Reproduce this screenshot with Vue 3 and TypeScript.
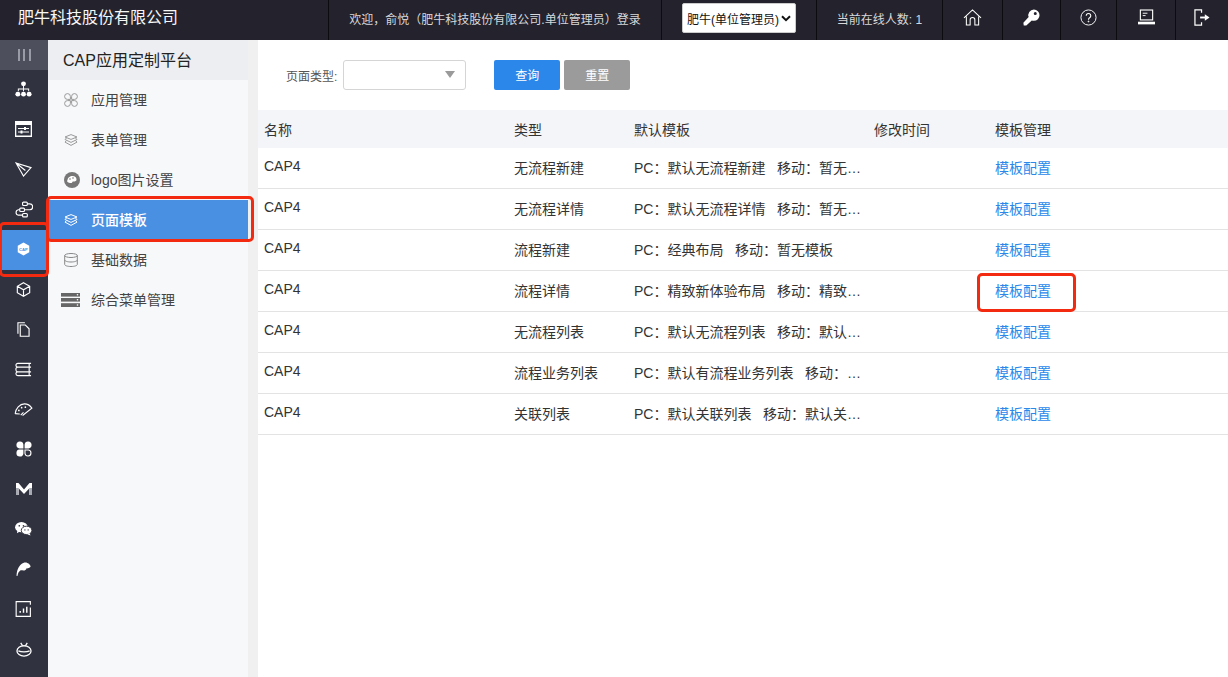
<script setup lang="ts">
const topCells = [
  { w: 60, k: 'home' }, { w: 58, k: 'key' }, { w: 56, k: 'help' }, { w: 59, k: 'pc' }, { w: 53, k: 'exit' },
]
const railIcons = ['org','panel','send','flow','cap','box','files','stack','gauge','clover','m','wechat','feather','chart','bug']
const menu = [
  { t: '应用管理', i: 'apps' }, { t: '表单管理', i: 'layers' }, { t: 'logo图片设置', i: 'palette' },
  { t: '页面模板', i: 'layers', active: true }, { t: '基础数据', i: 'db' }, { t: '综合菜单管理', i: 'server' },
]
const rows = [
  ['无流程新建', 'PC：默认无流程新建   移动：暂无…'],
  ['无流程详情', 'PC：默认无流程详情   移动：暂无…'],
  ['流程新建', 'PC：经典布局   移动：暂无模板'],
  ['流程详情', 'PC：精致新体验布局   移动：精致…'],
  ['无流程列表', 'PC：默认无流程列表   移动：默认…'],
  ['流程业务列表', 'PC：默认有流程业务列表   移动：…'],
  ['关联列表', 'PC：默认关联列表   移动：默认关…'],
]
</script>

<template>
  <div class="page">
    <header class="top">
      <div class="brand">肥牛科技股份有限公司</div>
      <div class="cell welcome">欢迎，俞悦（肥牛科技股份有限公司.单位管理员）登录</div>
      <div class="cell role">
        <div class="fake-select">肥牛(单位管理员)
          <svg width="10" height="7" viewBox="0 0 10 7"><path d="M1 1.200l4 4 4-4" fill="none" stroke="#111" stroke-width="2"/></svg>
        </div>
      </div>
      <div class="cell online">当前在线人数: 1</div>
      <div v-for="c in topCells" :key="c.k" class="cell icon-cell" :style="{ width: c.w + 'px' }">
        <svg v-if="c.k === 'home'" width="19" height="17" viewBox="0 0 20 18" fill="none" stroke="#fff" stroke-width="1.100"><path d="M1 9.500L10 1l9 8.500M3.500 8v9h4v-5.500a2.500 2.500 0 0 1 5 0V17h4V8"/></svg>
        <svg v-if="c.k === 'key'" width="17" height="17" viewBox="0 0 18 18" fill="#fff"><path d="M11.500 0.500a6 6 0 0 1 0 12c-.8 0-1.500-.2-2.200-.4L3.500 17.500H.8l-.4-3L6 8.600a6 6 0 0 1 5.500-8.100zm1.500 2.600a1.600 1.600 0 1 0 0 3.200 1.600 1.600 0 0 0 0-3.200z"/></svg>
        <svg v-if="c.k === 'help'" width="17" height="17" viewBox="0 0 18 18" fill="none" stroke="#fff" stroke-width="1"><circle cx="9" cy="9" r="8"/><path d="M6.600 7.200a2.400 2.400 0 1 1 3.600 2.100c-.8.500-1.200.9-1.200 2" stroke-width="1.200"/><circle cx="9" cy="13.200" r=".5" fill="#fff"/></svg>
        <svg v-if="c.k === 'pc'" width="17" height="16" viewBox="0 0 18 16" fill="none" stroke="#fff"><rect x="2.500" y=".6" width="13" height="10.500" stroke-width="1.200"/><path d="M5 4h5M5 6.500h3" stroke-width="1"/><path d="M0 13h18v2.800H0z" fill="#fff" stroke="none"/></svg>
        <svg v-if="c.k === 'exit'" width="16" height="17" viewBox="0 0 17 18" fill="none" stroke="#fff" stroke-width="1.300"><path d="M8 4V1H1v16h7v-3"/><path d="M6.500 9H12" stroke-width="2"/><path d="M11.500 5.500L16.500 9l-5 3.500z" fill="#fff" stroke="none"/></svg>
      </div>
    </header>

    <div class="body">
      <nav class="rail">
        <div class="collapse"><i></i><i></i><i></i></div>
        <div v-for="r in railIcons" :key="r" class="rail-item" :class="{ on: r === 'cap' }">
          <svg v-if="r === 'org'" width="17" height="16" viewBox="0 0 18 17" fill="#fff"><circle cx="9" cy="3" r="2.600"/><path d="M8.500 5h1v3h5.500v3h-1V9H9.500v2h-1V9H4v2H3V8h5.500z"/><circle cx="3" cy="14" r="2.600"/><circle cx="9" cy="14" r="2.600"/><circle cx="15" cy="14" r="2.600"/></svg>
          <svg v-if="r === 'panel'" width="17" height="16" viewBox="0 0 17 16"><rect width="17" height="16" fill="#fff"/><rect x="1.300" y="4" width="14.400" height="10.500" fill="#30333f"/><path d="M3 7.500h11M3 11h11" stroke="#fff" stroke-width="1"/><rect x="9" y="6" width="2" height="3" fill="#fff"/><rect x="5.500" y="9.500" width="2" height="3" fill="#fff"/></svg>
          <svg v-if="r === 'send'" width="17" height="15" viewBox="0 0 18 16" fill="none" stroke="#fff" stroke-width="1.200"><path d="M1 1l16 5-8 9zM1 1l10 8"/></svg>
          <svg v-if="r === 'flow'" width="18" height="17" viewBox="0 0 19 17" fill="none" stroke="#fff" stroke-width="1.200"><rect x="8" y=".7" width="5" height="3.600" rx="1"/><rect x="5" y="7" width="5" height="3.600" rx="1"/><rect x="8" y="12.700" width="5" height="3.600" rx="1"/><path d="M13 2.500h2.500a3 3 0 0 1 0 6.300H10M5 8.800H3.500a2.900 2.900 0 0 0 0 5.700H8"/></svg>
          <svg v-if="r === 'cap'" width="13" height="14" viewBox="0 0 14 15"><path d="M7 .5l6.200 3.400v7.200L7 14.500.8 11.100V3.900z" fill="#fff"/><text x="7" y="9.300" text-anchor="middle" class="captext">CAP</text></svg>
          <svg v-if="r === 'box'" width="15" height="15" viewBox="0 0 16 17" fill="none" stroke="#fff" stroke-width="1.300"><path d="M8 .8l7 4v7.400l-7 4-7-4V4.800zM1 4.800l7 4 7-4M8 8.800v7.400"/></svg>
          <svg v-if="r === 'files'" width="13" height="15" viewBox="0 0 14 16" fill="none" stroke="#fff" stroke-width="1.200"><path d="M1 12.500V.7h7.500"/><path d="M3.500 3.200h5.500l4 4v8.100H3.500z"/></svg>
          <svg v-if="r === 'stack'" width="17" height="15" viewBox="0 0 18 15" fill="none" stroke="#fff" stroke-width="1.200"><path d="M17 1H3a2 2 0 0 0-2 2v0a2 2 0 0 0 2 2h14M17 5H3a2 2 0 0 0-2 2.500V8a2 2 0 0 0 2 2h14M17 10H3a2 2 0 0 0-2 2v0a2 2 0 0 0 2 2h14M15 1v13"/></svg>
          <svg v-if="r === 'gauge'" width="19" height="13" viewBox="0 0 20 14" fill="none" stroke="#fff" stroke-width="1.200"><path d="M1 11.500C1.500 6 6 1 11 1c3 0 6 1.500 8 4.500L9 13.500"/><path d="M1 11.500l5 .3"/><circle cx="5" cy="8" r=".9" fill="#fff" stroke="none"/><circle cx="8" cy="5" r=".9" fill="#fff" stroke="none"/><circle cx="12" cy="4.500" r=".9" fill="#fff" stroke="none"/><path d="M7 13l3-3"/></svg>
          <svg v-if="r === 'clover'" width="16" height="16" viewBox="0 0 16 16" fill="#fff"><path d="M7.400 7.400H3.500a3.500 3.500 0 1 1 3.900-3.900zM8.600 7.400h3.900a3.500 3.500 0 1 0-3.900-3.900zM7.400 8.600H3.500a3.500 3.500 0 1 0 3.900 3.900z"/><path d="M9 9h3.500A3 3 0 1 1 9 12.500z" fill="none" stroke="#fff" stroke-width="1.100"/></svg>
          <svg v-if="r === 'm'" width="16" height="12" viewBox="0 0 16 12"><path d="M0 0h2.500L8 6.500 13.500 0H16v12h-2.800V5.500L8 11 2.800 5.500V12H0z" fill="#fff"/><path d="M1.400 5v7M14.600 5v7" stroke="#a9abb3" stroke-width="2.800"/></svg>
          <svg v-if="r === 'wechat'" width="17" height="14" viewBox="0 0 18 15" fill="#fff"><ellipse cx="6.800" cy="5.500" rx="6.800" ry="5.500"/><path d="M2.500 8.500L2 12l3.500-2z"/><ellipse cx="12.300" cy="9" rx="5.700" ry="4.500" stroke="#30333f"/><path d="M15.500 12l1 2.500-3.500-1.500z"/><circle cx="4.500" cy="4" r=".9" fill="#30333f"/><circle cx="9" cy="4" r=".9" fill="#30333f"/><circle cx="10.500" cy="8.500" r=".7" fill="#30333f"/><circle cx="14" cy="8.500" r=".7" fill="#30333f"/></svg>
          <svg v-if="r === 'feather'" width="15" height="14" viewBox="0 0 16 15" fill="#fff"><path d="M.6 15C.6 10 2.500 5 5.500 2.500 7.500.8 10 .2 12 1c2 .6 3.500 2 3.600 4-1.500 1.500-3 2-4.500 1.800.3 1-.7 2-2 2.200-1.800.3-3.300-.3-4.500 0C3 10 2 12 1.500 15z"/></svg>
          <svg v-if="r === 'chart'" width="17" height="16" viewBox="0 0 17 17" fill="none" stroke="#fff" stroke-width="1.200"><path d="M15.800 4V.7H.7v15.600h15.100V7"/><path d="M5 12.500v-2M8.500 12.500v-4.500M12 12.500v-6.500" stroke-width="1.500"/></svg>
          <svg v-if="r === 'bug'" width="16" height="15" viewBox="0 0 17 16" fill="none" stroke="#fff" stroke-width="1.400"><ellipse cx="8.500" cy="9.500" rx="7.500" ry="5.500"/><path d="M2.500 9.500c3 1.500 9 1.500 12 0M5 1l2 3M12 1l-2 3"/></svg>
        </div>
      </nav>

      <aside class="side">
        <div class="side-head">CAP应用定制平台</div>
        <div v-for="m in menu" :key="m.t" class="side-item" :class="{ on: m.active }">
          <span class="side-icon" :class="{ wide: m.i === 'server' }">
            <svg v-if="m.i === 'apps'" width="14" height="14" viewBox="0 0 14 14" fill="none" stroke="#999" stroke-width="1"><path d="M6.400 6.400H3.500a2.900 2.900 0 1 1 2.900-2.900zM7.600 6.400h2.900a2.900 2.900 0 1 0-2.900-2.900zM6.400 7.600H3.500a2.900 2.900 0 1 0 2.900 2.900zM7.600 7.600h2.900a2.900 2.900 0 1 1-2.900 2.900z"/></svg>
            <svg v-if="m.i === 'layers'" width="14" height="12" viewBox="0 0 14 12" fill="none" :stroke="m.active ? '#fff' : '#999'" stroke-width="1"><path d="M7 .6l6 2.400-6 2.400-6-2.400z"/><path d="M2.500 4L1 5.500 7 8.400l6-2.900L11.500 4M2.500 6.600L1 8.100l6 3.300 6-3.300-1.500-1.500"/></svg>
            <svg v-if="m.i === 'palette'" width="16" height="16" viewBox="0 0 16 16"><circle cx="8" cy="8" r="8" fill="#777"/><path d="M3.500 8.500C3.500 5.500 6 4 8.500 4s4 1.500 4 3.500-2.500 2-3.500 2-.5 1.500-1.500 1.500c-2 0-4.500-.5-4.500-2.500z" fill="#fff"/><circle cx="6" cy="7" r=".8" fill="#777"/><circle cx="9" cy="6" r=".8" fill="#777"/></svg>
            <svg v-if="m.i === 'db'" width="14" height="14" viewBox="0 0 14 14" fill="none" stroke="#888" stroke-width="1"><ellipse cx="7" cy="2.500" rx="6.300" ry="2"/><path d="M.7 2.500v9c0 1.100 2.800 2 6.300 2s6.300-.9 6.300-2v-9M.7 7c0 1.100 2.800 2 6.300 2s6.300-.9 6.300-2"/></svg>
            <svg v-if="m.i === 'server'" width="19" height="14" viewBox="0 0 19 14" fill="#666"><rect width="19" height="3.600"/><rect y="5" width="19" height="3.600"/><rect y="10.200" width="19" height="3.800"/><circle cx="16.500" cy="1.800" r=".8" fill="#fff"/><circle cx="16.500" cy="6.800" r=".8" fill="#fff"/><circle cx="16.500" cy="12" r=".8" fill="#fff"/></svg>
          </span>
          <span class="side-text">{{ m.t }}</span>
        </div>
      </aside>
      <div class="gutter"></div>

      <main class="main">
        <form class="filter" @submit.prevent>
          <label class="flabel">页面类型:</label>
          <div class="combo"><span class="caret"></span></div>
          <button class="btn primary" type="button">查询</button>
          <button class="btn grey" type="button">重置</button>
        </form>
        <div class="table">
          <div class="tr th">
            <div class="c1">名称</div><div class="c2">类型</div><div class="c3">默认模板</div><div class="c4">修改时间</div><div class="c5">模板管理</div>
          </div>
          <div v-for="(r, idx) in rows" :key="idx" class="tr td">
            <div class="c1 name">CAP4</div>
            <div class="c2">{{ r[0] }}</div>
            <div class="c3 ell">{{ r[1] }}</div>
            <div class="c4"></div>
            <div class="c5"><a class="link">模板配置</a></div>
          </div>
        </div>
      </main>
    </div>

    <div class="mark mark-rail"></div>
    <div class="mark mark-item"></div>
    <div class="mark mark-link"></div>
  </div>
</template>

<style>
html, body { margin: 0; background: #fff; overflow: hidden; }
</style>

<style scoped>
.page {
  position: relative; width: 1228px; height: 677px; overflow: hidden;
  font-family: "Liberation Sans", "Noto Sans CJK SC", sans-serif; color: #333; font-size: 14px;
}
.top { display: flex; height: 40px; background: #24232d; color: #d8d8da; font-size: 12px; }
.brand { width: 310px; padding-left: 18px; line-height: 36px; font-size: 16px; color: #f7f7f7; }
.cell { display: flex; align-items: center; justify-content: center; border-left: 1px solid #0b0b10; box-sizing: border-box; height: 40px; padding-bottom: 4px; }
.icon-cell { padding-bottom: 6px; }
.welcome { width: 333px; }
.role { width: 155px; }
.online { width: 126px; }
.fake-select {
  width: 114px; height: 30px; background: #fff; border: 1px solid #ccc; border-radius: 2px; box-sizing: border-box;
  color: #111; font-size: 12px; display: flex; align-items: center; justify-content: space-between; padding: 0 4px; white-space: nowrap;
}
.body { display: flex; height: 637px; }
.rail { width: 48px; background: #30333f; flex: none; }
.collapse { height: 30px; background: #4d505c; display: flex; align-items: center; justify-content: center; gap: 3.500px; }
.collapse i { width: 2px; height: 12px; background: #9a9ca5; }
.rail-item { height: 40px; display: flex; align-items: center; justify-content: center; padding: 0 1px 2px 0; box-sizing: border-box; }
.rail-item.on { background: #4a90e2; }
.captext { font-size: 4.500px; font-weight: 700; fill: #4a90e2; font-family: "Liberation Sans", sans-serif; }
.side { width: 200px; background: #f7f8fa; flex: none; }
.side-head { height: 40px; background: #eceef1; padding-left: 15px; line-height: 41px; font-size: 16px; color: #222; }
.side-item { height: 40px; display: flex; align-items: center; padding-left: 16px; color: #444; font-size: 14px; }
.side-item.on { background: #4a90e2; color: #fff; font-weight: 500; }
.side-icon { width: 27px; display: flex; align-items: center; }
.side-icon.wide { margin-left: -3px; width: 30px; }
.side-text { padding-bottom: 2px; }
.gutter { width: 10px; background: #f0f0f0; flex: none; }
.main { flex: 1; min-width: 0; background: #fff; }
.filter { height: 70px; display: flex; align-items: center; padding-left: 28px; }
.flabel { font-size: 12px; color: #555; margin-right: 6px; }
.combo { width: 123px; height: 30px; border: 1px solid #d5d5d5; border-radius: 3px; box-sizing: border-box; position: relative; margin-right: 28px; }
.caret { position: absolute; right: 10px; top: 10px; border: 5px solid transparent; border-top: 7px solid #9a9a9a; border-left-width: 5.500px; border-right-width: 5.500px; }
.btn { width: 66px; height: 30px; border: 0; border-radius: 2px; color: #fff; font: inherit; font-size: 12px; padding: 0 0 2px; }
.primary { background: #2b88ea; margin-right: 4px; }
.grey { background: #9b9b9b; }
.table { width: 970px; }
.tr { display: flex; }
.tr > div { box-sizing: border-box; padding-left: 6px; flex: none; }
.th { height: 38px; line-height: 40px; background: #f4f5f8; color: #333; font-size: 14px; }
.td { height: 41px; line-height: 40px; border-bottom: 1px solid #e3e3e3; box-sizing: border-box; color: #333; }
.c1 { width: 250px; }
.c2 { width: 120px; }
.c3 { width: 240px; }
.c4 { width: 121px; }
.c5 { width: 239px; }
.name { line-height: 36px; }
.ell { white-space: pre; }
.link { color: #2b88ea; }
.mark { position: absolute; border: 3px solid #f32a10; border-radius: 5px; box-sizing: border-box; pointer-events: none; }
.mark-rail { left: -1px; top: 222px; width: 50px; height: 55px; }
.mark-item { left: 46px; top: 196px; width: 208px; height: 46px; }
.mark-link { left: 977px; top: 273px; width: 99px; height: 39px; }
</style>
